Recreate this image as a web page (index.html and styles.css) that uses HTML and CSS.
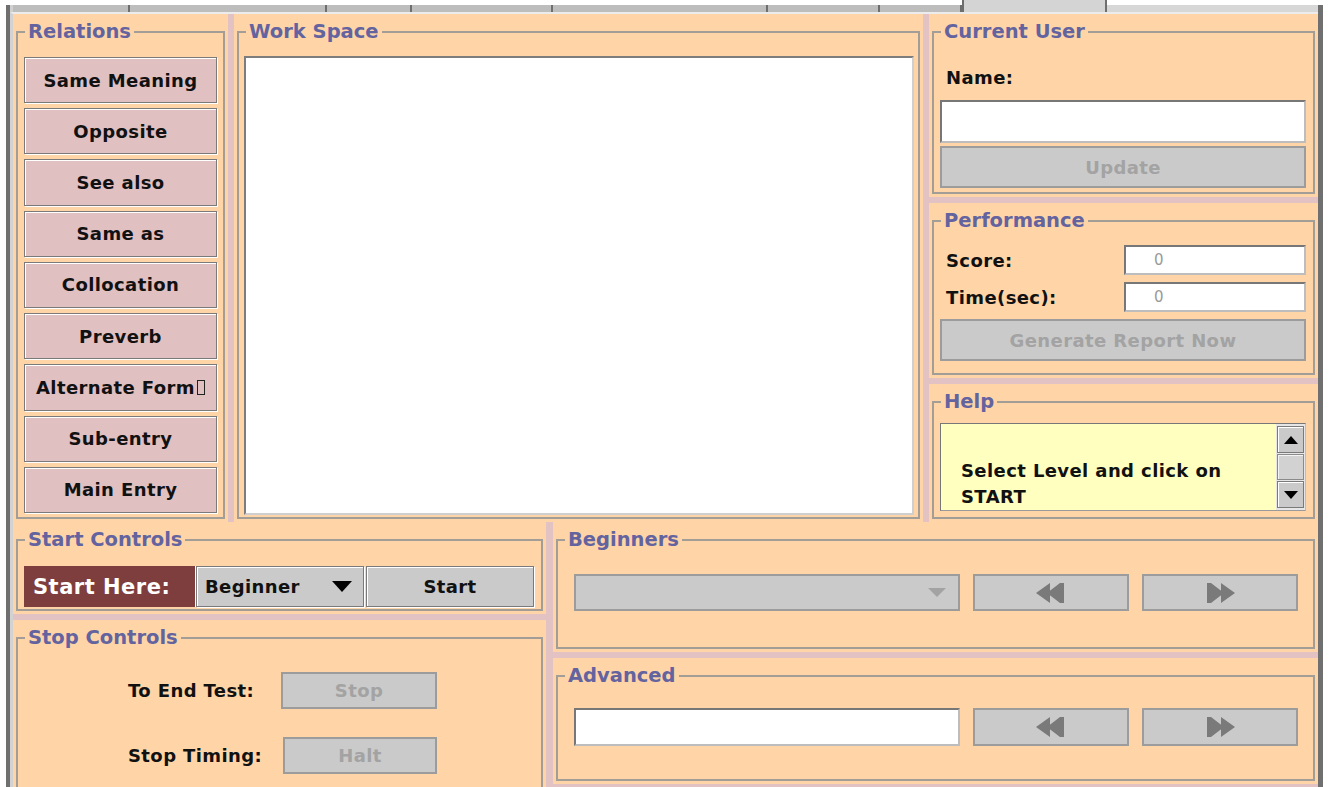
FILE: index.html
```html
<!DOCTYPE html>
<html lang="en">
<head>
<meta charset="utf-8">
<title>Relations Trainer</title>
<link rel="stylesheet" href="styles.css">
</head>
<body>
<div class="window">
  <div class="tabs">
    <div class="tab"></div>
    <div class="tab"></div>
    <div class="tab"></div>
    <div class="tab"></div>
    <div class="tab"></div>
    <div class="tab"></div>
    <div class="tab"></div>
    <div class="tab tab-active"></div>
    <div class="tab-rest"></div>
  </div>
  <div class="frame">
    <div class="app">

      <div class="top-row">
        <div class="cell">
          <fieldset class="group">
            <legend>Relations</legend>
            <div class="group-body relations">
              <button class="rel-btn">Same Meaning</button>
              <button class="rel-btn">Opposite</button>
              <button class="rel-btn">See also</button>
              <button class="rel-btn">Same as</button>
              <button class="rel-btn">Collocation</button>
              <button class="rel-btn">Preverb</button>
              <button class="rel-btn">Alternate Form<span class="tofu"></span></button>
              <button class="rel-btn">Sub-entry</button>
              <button class="rel-btn">Main Entry</button>
            </div>
          </fieldset>
        </div>

        <div class="cell">
          <fieldset class="group">
            <legend>Work Space</legend>
            <div class="group-body workspace">
              <div class="canvas"></div>
            </div>
          </fieldset>
        </div>

        <div class="side">
          <div class="cell">
            <fieldset class="group">
              <legend>Current User</legend>
              <div class="group-body user">
                <div class="field-label name-label">Name:</div>
                <div class="text-input name-input"></div>
                <button class="gray-btn update-btn" disabled>Update</button>
              </div>
            </fieldset>
          </div>
          <div class="cell">
            <fieldset class="group">
              <legend>Performance</legend>
              <div class="group-body perf">
                <div class="field-label">Score:</div>
                <div class="text-input value-input">0</div>
                <div class="field-label">Time(sec):</div>
                <div class="text-input value-input">0</div>
                <button class="gray-btn report-btn" disabled>Generate Report Now</button>
              </div>
            </fieldset>
          </div>
          <div class="cell">
            <fieldset class="group">
              <legend>Help</legend>
              <div class="group-body help">
                <div class="help-box">
                  <div class="help-text">Select Level and click on<br>START</div>
                  <div class="scrollbar">
                    <div class="sb-btn">
                      <svg width="14" height="8" viewBox="0 0 14 8"><polygon points="0,8 7,0 14,8" fill="#000"/></svg>
                    </div>
                    <div class="sb-thumb"></div>
                    <div class="sb-btn">
                      <svg width="14" height="8" viewBox="0 0 14 8"><polygon points="0,0 14,0 7,8" fill="#000"/></svg>
                    </div>
                  </div>
                </div>
              </div>
            </fieldset>
          </div>
        </div>
      </div>

      <div class="bottom-row">
        <div class="stack-left">
          <div class="cell">
            <fieldset class="group">
              <legend>Start Controls</legend>
              <div class="group-body start">
                <div class="start-label">Start Here:</div>
                <div class="combo level-combo">
                  <span>Beginner</span>
                  <svg width="20" height="11" viewBox="0 0 20 11"><polygon points="0,0 20,0 10,11" fill="#000"/></svg>
                </div>
                <button class="raised-btn start-btn">Start</button>
              </div>
            </fieldset>
          </div>
          <div class="cell">
            <fieldset class="group">
              <legend>Stop Controls</legend>
              <div class="group-body stop">
                <div class="field-label">To End Test:</div>
                <button class="gray-btn" disabled>Stop</button>
                <div class="field-label">Stop Timing:</div>
                <button class="gray-btn halt-btn" disabled>Halt</button>
              </div>
            </fieldset>
          </div>
        </div>

        <div class="stack-right">
          <div class="cell">
            <fieldset class="group">
              <legend>Beginners</legend>
              <div class="group-body nav-row beginners">
                <div class="gray-btn combo-off">
                  <svg width="18" height="9" viewBox="0 0 18 9"><polygon points="0,0 18,0 9,9" fill="#a3a3a3"/></svg>
                </div>
                <button class="gray-btn" disabled aria-label="Previous">
                  <svg width="30" height="22" viewBox="0 0 30 22"><polygon points="0,11 14,1 14,21" fill="#7a7a7a"/><polygon points="11,11 24,1 24,21" fill="#7a7a7a"/><rect x="24" y="1" width="4" height="20" fill="#7a7a7a"/></svg>
                </button>
                <button class="gray-btn" disabled aria-label="Next">
                  <svg width="30" height="22" viewBox="0 0 30 22"><rect x="2" y="1" width="4" height="20" fill="#7a7a7a"/><polygon points="6,1 19,11 6,21" fill="#7a7a7a"/><polygon points="16,1 30,11 16,21" fill="#7a7a7a"/></svg>
                </button>
              </div>
            </fieldset>
          </div>
          <div class="cell">
            <fieldset class="group">
              <legend>Advanced</legend>
              <div class="group-body nav-row advanced">
                <div class="text-input adv-input"></div>
                <button class="gray-btn" disabled aria-label="Previous">
                  <svg width="30" height="22" viewBox="0 0 30 22"><polygon points="0,11 14,1 14,21" fill="#7a7a7a"/><polygon points="11,11 24,1 24,21" fill="#7a7a7a"/><rect x="24" y="1" width="4" height="20" fill="#7a7a7a"/></svg>
                </button>
                <button class="gray-btn" disabled aria-label="Next">
                  <svg width="30" height="22" viewBox="0 0 30 22"><rect x="2" y="1" width="4" height="20" fill="#7a7a7a"/><polygon points="6,1 19,11 6,21" fill="#7a7a7a"/><polygon points="16,1 30,11 16,21" fill="#7a7a7a"/></svg>
                </button>
              </div>
            </fieldset>
          </div>
        </div>
      </div>

    </div>
  </div>
</div>
</body>
</html>
```
FILE: styles.css
```css
* { box-sizing: border-box; }

html, body {
  margin: 0;
  padding: 0;
  background: #fff;
  overflow: hidden;
}

body {
  font-family: "DejaVu Sans", "Liberation Sans", sans-serif;
  color: #111;
}

/* window frame */
.window {
  margin: 5px 0 0 6px;
  width: 1317px;
  height: 782px;
  border-left: 4px solid #6f6f6f;
  border-right: 5px solid #6f6f6f;
  display: flex;
  flex-direction: column;
}

/* strip of tabs cut off at the top */
.tabs {
  height: 7px;
  display: grid;
  grid-template-columns: 120px 197px 85px 141px 215px 112px 82px 145px 1fr;
  background: #bdbdbd;
  flex: none;
}

.tab {
  border-right: 2px solid #6e6e6e;
}

.tab:first-child {
  border-left: 3px solid #d0d0d0;
}

.tab-active {
  margin-top: -5px;
  background: #d4d4d4;
  border-left: 2px solid #6e6e6e;
}

.tab-rest {
  background: #d7d7d7;
}

.frame {
  flex: 1;
  min-height: 0;
  border-left: 3px solid #d2d2d2;
  border-top: 2px solid #ececec;
  display: flex;
  flex-direction: column;
}

/* application surface: pink shows between the peach panels */
.app {
  flex: 1;
  min-height: 0;
  overflow: hidden;
  background: #e2c2c3;
  display: flex;
  flex-direction: column;
  gap: 6px;
}

.top-row {
  flex: none;
  height: 502px;
  display: grid;
  grid-template-columns: 215px 689px 1fr;
  column-gap: 6px;
}

.side {
  display: grid;
  grid-template-rows: 183px 175px 1fr;
  row-gap: 6px;
}

.bottom-row {
  flex: none;
  display: grid;
  grid-template-columns: 533px 1fr;
  column-gap: 7px;
  align-items: start;
}

.stack-left {
  display: grid;
  grid-template-rows: 92px 200px;
  row-gap: 6px;
}

.stack-right {
  display: grid;
  grid-template-rows: 130px 126px;
  row-gap: 6px;
}

.cell {
  background: #ffd5a8;
  padding: 3px;
  min-width: 0;
  min-height: 0;
}

/* titled group box */
.group {
  margin: 0;
  padding: 0;
  min-width: 0;
  height: 100%;
  border: 2px solid #a29d97;
  display: flex;
  flex-direction: column;
}

.group > legend {
  margin-left: 7px;
  padding: 0 3px;
  height: 30px;
  line-height: 30px;
  font-family: "DejaVu Sans", sans-serif;
  font-weight: bold;
  font-size: 19.5px;
  color: #63639f;
}

.group-body {
  flex: 1;
  min-height: 0;
}

/* shared text styles */
.field-label,
.rel-btn,
.gray-btn,
.raised-btn,
.combo,
.help-text {
  font-family: "DejaVu Sans", sans-serif;
  font-weight: bold;
  font-size: 18px;
  letter-spacing: 0.4px;
  white-space: nowrap;
}

button {
  margin: 0;
  padding: 0;
  font: inherit;
}

/* relation buttons */
.relations {
  padding: 10px 6px 4px 6px;
  display: flex;
  flex-direction: column;
  gap: 5px;
}

.rel-btn {
  flex: 1;
  min-height: 0;
  background: #e0c0c1;
  color: #111;
  border: 1px solid #7a7a7a;
  box-shadow: inset 1px 1px 0 #fff, 1px 1px 0 #fff;
  overflow: hidden;
  display: flex;
  align-items: center;
  justify-content: center;
}

.tofu {
  display: inline-block;
  width: 8px;
  height: 15px;
  margin-left: 2px;
  border: 1px solid #222;
}

/* work space */
.workspace {
  padding: 9px 4px 2px 5px;
  display: flex;
}

.canvas {
  flex: 1;
  background: #fff;
  border: 2px solid;
  border-color: #7d7d7d #cfcfcf #cfcfcf #7d7d7d;
}

/* inputs and buttons */
.text-input {
  background: #fff;
  border: 2px solid;
  border-color: #777 #bdbdbd #bdbdbd #777;
}

.gray-btn {
  background: #cacaca;
  color: #a3a3a3;
  border: 2px solid #9c9c9c;
  display: flex;
  align-items: center;
  justify-content: center;
}

.raised-btn {
  background: #cacaca;
  color: #111;
  border: 1px solid #7a7a7a;
  box-shadow: inset 1px 1px 0 #fff, 1px 1px 0 #fff;
}

/* current user */
.user {
  padding: 0 7px 4px 6px;
  display: flex;
  flex-direction: column;
}

.name-label {
  margin: 19px 0 10px 6px;
  line-height: 24px;
}

.name-input {
  height: 43px;
}

.update-btn {
  height: 42px;
  margin-top: 3px;
}

/* performance */
.perf {
  padding: 9px 7px 0 6px;
  display: grid;
  grid-template-columns: 1fr 182px;
  grid-template-rows: 30px 30px 42px;
  row-gap: 7px;
  align-items: center;
}

.perf .field-label {
  padding-left: 6px;
}

.value-input {
  height: 30px;
  padding-left: 28px;
  display: flex;
  align-items: center;
  font-family: "DejaVu Sans", sans-serif;
  font-size: 15px;
  color: #9a9a9a;
}

.report-btn {
  grid-column: 1 / 3;
  height: 42px;
}

/* help */
.help {
  padding: 6px 7px 6px 6px;
  display: flex;
}

.help-box {
  flex: 1;
  display: flex;
  background: #ffffc0;
  border: 1px solid #777;
  border-right-color: #bdbdbd;
  border-bottom-color: #9a9a9a;
  overflow: hidden;
}

.help-text {
  flex: 1;
  padding: 34px 0 0 20px;
  line-height: 26px;
  color: #111;
  overflow: hidden;
}

.scrollbar {
  width: 29px;
  padding: 2px 1px 2px 1px;
  display: flex;
  flex-direction: column;
  background: #e6e6e6;
}

.sb-btn {
  height: 27px;
  background: #cacaca;
  border: 1px solid #7a7a7a;
  box-shadow: inset 1px 1px 0 #fff;
  display: flex;
  align-items: center;
  justify-content: center;
}

.sb-thumb {
  flex: 1;
  margin: 1px 0;
  background: #d2d2d2;
  border: 1px solid #8a8a8a;
  box-shadow: inset 1px 1px 0 #f4f4f4;
}

/* start controls */
.start {
  padding: 11px 7px 0 6px;
  display: flex;
  align-items: flex-start;
}

.start-label {
  width: 172px;
  height: 41px;
  background: #7f3e3e;
  color: #fff;
  padding-left: 9px;
  display: flex;
  align-items: center;
  font-family: "DejaVu Sans", sans-serif;
  font-weight: bold;
  font-size: 21px;
  letter-spacing: 0.5px;
  white-space: nowrap;
}

.combo {
  width: 168px;
  height: 41px;
  background: #cacaca;
  border: 1px solid #7a7a7a;
  box-shadow: inset 1px 1px 0 #fff, -1px 0 0 #fff, 1px 1px 0 #fff;
  padding: 0 11px 0 8px;
  display: flex;
  align-items: center;
  justify-content: space-between;
  color: #111;
}

.start-btn {
  flex: 1;
  height: 41px;
  margin-left: 2px;
}

/* stop controls */
.stop {
  padding: 19px 0 0 110px;
  display: grid;
  grid-template-columns: 133px 156px;
  grid-auto-rows: 37px;
  column-gap: 20px;
  row-gap: 28px;
  align-items: center;
  align-content: start;
}

.stop .gray-btn {
  height: 37px;
}

.halt-btn {
  margin-left: 2px;
}

/* navigation rows */
.nav-row {
  padding: 19px 15px 0 16px;
  display: grid;
  grid-template-columns: 1fr 156px 156px;
  column-gap: 13px;
  align-items: start;
}

.nav-row > * {
  height: 37px;
}

.advanced {
  padding-top: 17px;
}

.advanced > * {
  height: 38px;
}

.combo-off {
  justify-content: flex-end;
  padding-right: 12px;
}
```
